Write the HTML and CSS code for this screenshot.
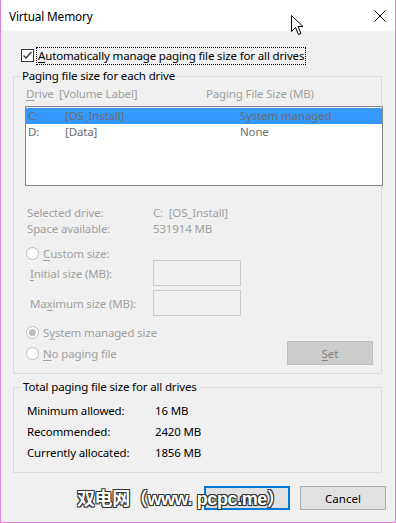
FILE: index.html
```html
<!DOCTYPE html>
<html lang="en">
<head>
    <meta charset="UTF-8">
    <meta name="viewport" content="width=device-width, initial-scale=1.0">
    <title>Virtual Memory</title>
    <link rel="stylesheet" href="styles.css">
</head>
<body>
    <div class="window">
        <div class="titlebar">
            <span class="title">Virtual Memory</span>
            <svg class="close" width="12" height="12" viewBox="0 0 12 12">
                <path d="M0.5 0.5 L11.5 11.5 M11.5 0.5 L0.5 11.5" stroke="#000" stroke-width="1" fill="none"/>
            </svg>
        </div>

        <svg class="cursor" width="13" height="21" viewBox="0 0 13 21">
            <path d="M0.5 0.5 L0.5 16.5 L4.5 12.5 L7.5 19.5 L10 18.5 L7 11.5 L12 11.5 Z" fill="#fff" stroke="#000" stroke-width="1" stroke-linejoin="miter"/>
        </svg>

        <div class="content">
            <div class="auto-row">
                <span class="checkbox">
                    <svg width="11" height="11" viewBox="0 0 11 11">
                        <path d="M1.5 5.5 L4 8 L9.5 2" stroke="#333" stroke-width="1.3" fill="none"/>
                    </svg>
                </span>
                <span class="focus-label"><u>A</u>utomatically manage paging file size for all drives</span>
            </div>

            <fieldset class="group drives">
                <legend>Paging file size for each drive</legend>
                <div class="col-head">
                    <span class="col-drive"><u>D</u>rive</span>
                    <span class="col-label">[Volume Label]</span>
                    <span class="col-size">Paging File Size (MB)</span>
                </div>
                <div class="drive-list">
                    <div class="drive-row selected">
                        <span class="d-letter">C:</span>
                        <span class="d-label">[OS_Install]</span>
                        <span class="d-size">System managed</span>
                    </div>
                    <div class="drive-row">
                        <span class="d-letter">D:</span>
                        <span class="d-label">[Data]</span>
                        <span class="d-size">None</span>
                    </div>
                </div>

                <div class="info">
                    <div class="info-row"><span class="info-key">Selected drive:</span><span>C:&nbsp; [OS_Install]</span></div>
                    <div class="info-row"><span class="info-key">Space available:</span><span>531914 MB</span></div>
                </div>

                <div class="radio-row custom">
                    <span class="radio"></span>
                    <span><u>C</u>ustom size:</span>
                </div>
                <div class="field-row first">
                    <span class="field-label"><u>I</u>nitial size (MB):</span>
                    <span class="textbox"></span>
                </div>
                <div class="field-row">
                    <span class="field-label">Ma<u>x</u>imum size (MB):</span>
                    <span class="textbox"></span>
                </div>
                <div class="radio-row system">
                    <span class="radio checked"></span>
                    <span>S<u>y</u>stem managed size</span>
                </div>
                <div class="last-row">
                    <div class="radio-row">
                        <span class="radio"></span>
                        <span><u>N</u>o paging file</span>
                    </div>
                    <button type="button" class="button set-button" disabled><u>S</u>et</button>
                </div>
            </fieldset>

            <fieldset class="group totals">
                <legend>Total paging file size for all drives</legend>
                <div class="total-row"><span class="total-key">Minimum allowed:</span><span>16 MB</span></div>
                <div class="total-row"><span class="total-key">Recommended:</span><span>2420 MB</span></div>
                <div class="total-row"><span class="total-key">Currently allocated:</span><span>1856 MB</span></div>
            </fieldset>

            <div class="buttons">
                <button type="button" class="button ok-button">OK</button>
                <button type="button" class="button">Cancel</button>
            </div>
        </div>

        <div class="watermark">双电网（www. pcpc.me）</div>
    </div>
</body>
</html>
```

FILE: styles.css
```css
body {
    margin: 0;
    font-family: "Noto Sans", "Open Sans", sans-serif;
    font-size: 11.5px;
    letter-spacing: -0.15px;
    color: #000;
    background-color: #f0f0f0;
}
u {
    text-decoration: underline;
    text-underline-offset: 2px;
}
.window {
    position: relative;
    width: 396px;
    height: 523px;
    box-sizing: border-box;
    border-left: 1px solid #da85da;
    border-right: 1px solid #da85da;
    border-bottom: 1px solid #da85da;
    background-color: #f0f0f0;
    overflow: hidden;
}
.titlebar {
    height: 31px;
    background-color: #fff;
    display: flex;
    align-items: center;
    justify-content: space-between;
    padding: 0 9px 0 8px;
}
.title {
    font-size: 11.8px;
    line-height: 16px;
}
.close {
    display: block;
    margin-top: 1px;
}
.cursor {
    position: absolute;
    left: 290px;
    top: 15px;
}
.content {
    padding: 0 13px 0 12px;
}
.auto-row {
    display: flex;
    align-items: center;
    height: 17px;
    margin-top: 16px;
    padding-left: 8px;
}
.checkbox {
    width: 11px;
    height: 11px;
    border: 1px solid #333;
    background-color: #fff;
    display: flex;
    align-items: center;
    justify-content: center;
    margin-right: 3px;
}
.checkbox svg {
    display: block;
}
.focus-label {
    outline: 1px dotted #000;
    padding: 0 1px;
    line-height: 16px;
}
.group {
    margin: 0;
    border: 1px solid #dcdcdc;
    min-width: 0;
}
.group legend {
    padding: 0 1px;
    line-height: 16px;
}
.drives {
    margin-top: 4px;
    padding: 2px 8px 8px 11px;
    color: #a0a0a0;
}
.drives legend {
    color: #000;
    margin-left: -4px;
}
.col-head {
    display: flex;
    height: 16px;
    line-height: 16px;
    padding-left: 1px;
}
.col-drive {
    width: 33px;
}
.col-label {
    width: 147px;
}
.drive-list {
    margin-top: 4px;
    margin-right: -10px;
    height: 77px;
    border: 1px solid #828790;
    background-color: #fff;
    padding-top: 1px;
    box-sizing: content-box;
    color: #6d6d6d;
}
.drive-row {
    display: flex;
    height: 16px;
    line-height: 16px;
    padding-left: 2px;
}
.drive-row.selected {
    background-color: #3399ff;
}
.d-letter {
    width: 37px;
}
.d-label {
    width: 175px;
}
.info {
    margin-top: 19px;
}
.info-row {
    display: flex;
    height: 16px;
    line-height: 16px;
    padding-left: 2px;
}
.info-key {
    width: 126px;
}
.radio-row {
    display: flex;
    align-items: center;
    height: 16px;
    padding-left: 1px;
}
.radio {
    width: 11px;
    height: 11px;
    border: 1px solid #bcbcbc;
    border-radius: 50%;
    background-color: #fff;
    margin-right: 4px;
    display: flex;
    align-items: center;
    justify-content: center;
}
.radio.checked::after {
    content: "";
    width: 7px;
    height: 7px;
    border-radius: 50%;
    background-color: #bcbcbc;
}
.custom {
    margin-top: 8px;
}
.field-row {
    display: flex;
    align-items: center;
    height: 26px;
    margin-top: 4px;
    padding-left: 5px;
}
.field-row.first {
    margin-top: -1px;
}
.field-label {
    width: 123px;
}
.textbox {
    width: 86px;
    height: 24px;
    border: 1px solid #cccccc;
    background-color: #f0f0f0;
}
.system {
    margin-top: 8px;
}
.last-row {
    display: flex;
    align-items: center;
    justify-content: space-between;
    height: 24px;
    margin-top: 1px;
}
.button {
    width: 86px;
    height: 24px;
    box-sizing: border-box;
    font-family: "Noto Sans", "Open Sans", sans-serif;
    font-size: 11.5px;
    color: #000;
    background-color: #e1e1e1;
    border: 1px solid #adadad;
    padding: 0;
}
.set-button {
    background-color: #cccccc;
    border-color: #bfbfbf;
    color: #838383;
}
.totals {
    margin-top: 5px;
    padding: 5px 0 9px 13px;
}
.totals legend {
    margin-left: -5px;
}
.total-row {
    display: flex;
    height: 21px;
    line-height: 21px;
}
.total-key {
    width: 128px;
}
.buttons {
    display: flex;
    justify-content: flex-end;
    gap: 10px;
    margin-top: 13px;
    margin-right: -4px;
}
.ok-button {
    border: 2px solid #0078d7;
}
.watermark {
    position: absolute;
    left: 76px;
    top: 486px;
    font-family: "Liberation Sans", "Noto Sans CJK SC", sans-serif;
    font-size: 18px;
    font-weight: bold;
    letter-spacing: -0.4px;
    line-height: 26px;
    color: #fff;
    white-space: nowrap;
    text-shadow: 1px 1px 0 #333, -1px -1px 0 #333, 1px -1px 0 #333, -1px 1px 0 #333, 0 1px 1px #333;
}
```
